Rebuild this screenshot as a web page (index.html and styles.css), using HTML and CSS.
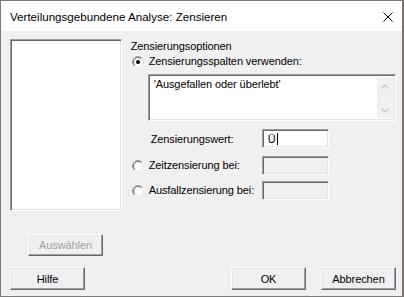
FILE: index.html
```html
<!DOCTYPE html>
<html>
<head>
    <meta charset="UTF-8">
    <title>Verteilungsgebundene Analyse: Zensieren</title>
    <link rel="stylesheet" href="styles.css">
</head>
<body>
    <div class="window">
        <div class="titlebar">
            <span class="title">Verteilungsgebundene Analyse: Zensieren</span>
            <svg class="close" width="10" height="10" viewBox="0 0 10 10">
                <path d="M0.5 0.5 L9.5 9.5 M9.5 0.5 L0.5 9.5" stroke="#000" stroke-width="1" fill="none"/>
            </svg>
        </div>

        <div class="content">
            <div class="main">
                <div class="left">
                    <div class="listbox sunken"></div>
                    <button class="btn select" disabled>Auswählen</button>
                </div>

                <div class="right">
                    <div class="heading">Zensierungsoptionen</div>

                    <label class="radio-row">
                        <svg class="radio" width="12" height="12" viewBox="0 0 12 12">
                            <circle cx="6" cy="6" r="5.5" fill="#fff" stroke="#e3e3e3"/>
                            <path d="M2.1 9.9 A5.5 5.5 0 0 1 9.9 2.1" stroke="#a0a0a0" fill="none"/>
                            <path d="M2.8 9.2 A4.5 4.5 0 0 1 9.2 2.8" stroke="#696969" fill="none"/>
                            <circle cx="6" cy="6" r="2" fill="#000"/>
                        </svg>
                        <span>Zensierungsspalten verwenden:</span>
                    </label>

                    <div class="columns sunken">
                        <div class="columns-text">'Ausgefallen oder überlebt'</div>
                        <div class="scrollbar">
                            <svg width="8" height="5" viewBox="0 0 8 5"><path d="M0.5 4.5 L4 1 L7.5 4.5" stroke="#c4c4c4" stroke-width="1.2" fill="none"/></svg>
                            <svg width="8" height="5" viewBox="0 0 8 5"><path d="M0.5 0.5 L4 4 L7.5 0.5" stroke="#c4c4c4" stroke-width="1.2" fill="none"/></svg>
                        </div>
                    </div>

                    <div class="field-row first">
                        <span class="field-label indent">Zensierungswert:</span>
                        <div class="field sunken"><span>Ü</span><span class="caret"></span></div>
                    </div>

                    <div class="field-row second">
                        <label class="radio-row">
                            <svg class="radio" width="12" height="12" viewBox="0 0 12 12">
                                <circle cx="6" cy="6" r="5.5" fill="#fff" stroke="#e3e3e3"/>
                                <path d="M2.1 9.9 A5.5 5.5 0 0 1 9.9 2.1" stroke="#a0a0a0" fill="none"/>
                                <path d="M2.8 9.2 A4.5 4.5 0 0 1 9.2 2.8" stroke="#696969" fill="none"/>
                            </svg>
                            <span>Zeitzensierung bei:</span>
                        </label>
                        <div class="field sunken disabled"></div>
                    </div>

                    <div class="field-row third">
                        <label class="radio-row">
                            <svg class="radio" width="12" height="12" viewBox="0 0 12 12">
                                <circle cx="6" cy="6" r="5.5" fill="#fff" stroke="#e3e3e3"/>
                                <path d="M2.1 9.9 A5.5 5.5 0 0 1 9.9 2.1" stroke="#a0a0a0" fill="none"/>
                                <path d="M2.8 9.2 A4.5 4.5 0 0 1 9.2 2.8" stroke="#696969" fill="none"/>
                            </svg>
                            <span>Ausfallzensierung bei:</span>
                        </label>
                        <div class="field sunken disabled"></div>
                    </div>
                </div>
            </div>

            <div class="footer">
                <button class="btn">Hilfe</button>
                <div class="spacer"></div>
                <button class="btn">OK</button>
                <button class="btn">Abbrechen</button>
            </div>
        </div>
    </div>
</body>
</html>
```

FILE: styles.css
```css
* {
    margin: 0;
    padding: 0;
    box-sizing: border-box;
}

body {
    background: #7a7468;
    font-family: "Liberation Sans", Arial, sans-serif;
    font-size: 11px;
    letter-spacing: -0.1px;
    color: #000;
}

.window {
    width: 403px;
    height: 297px;
    border: 1px solid #7a7a7a;
    background: #f0f0f0;
    display: flex;
    flex-direction: column;
}

.titlebar {
    height: 30px;
    background: #fff;
    display: flex;
    align-items: center;
    padding: 0 9px 0 9px;
}

.title {
    font-size: 11.6px;
    letter-spacing: 0;
    flex: 1;
    margin-top: 1px;
}

.close {
    margin-top: 1px;
}

.content {
    flex: 1;
    padding: 8px 6px 6px 9px;
    display: flex;
    flex-direction: column;
}

/* 3D borders */
.sunken {
    border: 1px solid;
    border-color: #a0a0a0 #fff #fff #a0a0a0;
    box-shadow: inset 1px 1px #696969, inset -1px -1px #e3e3e3;
    background: #fff;
}

.btn {
    width: 75px;
    height: 23px;
    font-family: inherit;
    font-size: 11px;
    letter-spacing: -0.1px;
    color: #000;
    background: #f0f0f0;
    border: 1px solid;
    border-color: #fff #696969 #696969 #fff;
    box-shadow: inset -1px -1px #a0a0a0, inset 1px 1px #e3e3e3;
}

.btn:disabled {
    color: #a0a0a0;
}

.main {
    display: flex;
}

.left {
    width: 112px;
    display: flex;
    flex-direction: column;
}

.listbox {
    height: 172px;
}

.select {
    margin: 23px 0 0 18px;
    height: 22px;
    width: 75px;
}

.right {
    margin-left: 9px;
    width: 266px;
    display: flex;
    flex-direction: column;
}

.heading {
    height: 15px;
    line-height: 15px;
}

.radio-row {
    height: 15px;
    display: flex;
    align-items: center;
    line-height: 15px;
}

.radio {
    margin-left: 1px;
    margin-right: 5px;
    flex-shrink: 0;
}

.columns {
    margin: 5px 0 0 17px;
    width: 248px;
    height: 47px;
    display: flex;
}

.columns-text {
    flex: 1;
    padding: 3px 0 0 5px;
    line-height: 13px;
}

.scrollbar {
    width: 17px;
    margin: 2px 1px 2px 0;
    background: #f0f0f0;
    display: flex;
    flex-direction: column;
    justify-content: space-between;
    align-items: center;
    padding: 7px 0 5px;
}

.field-row {
    display: grid;
    grid-template-columns: 131px 67px;
    align-items: center;
    height: 19px;
}

.field-row.first {
    margin-top: 8px;
}

.field-row.second {
    margin-top: 8px;
}

.field-row.third {
    margin-top: 6px;
}

.indent {
    padding-left: 20px;
}

.field {
    height: 19px;
    display: flex;
    align-items: center;
    padding-left: 5px;
}

.field.disabled {
    background: #f0f0f0;
}

.caret {
    width: 1px;
    height: 12px;
    background: #000;
    margin-left: 1px;
}

.footer {
    margin-top: 11px;
    display: flex;
    gap: 15px;
}

.spacer {
    flex: 1;
}
```
